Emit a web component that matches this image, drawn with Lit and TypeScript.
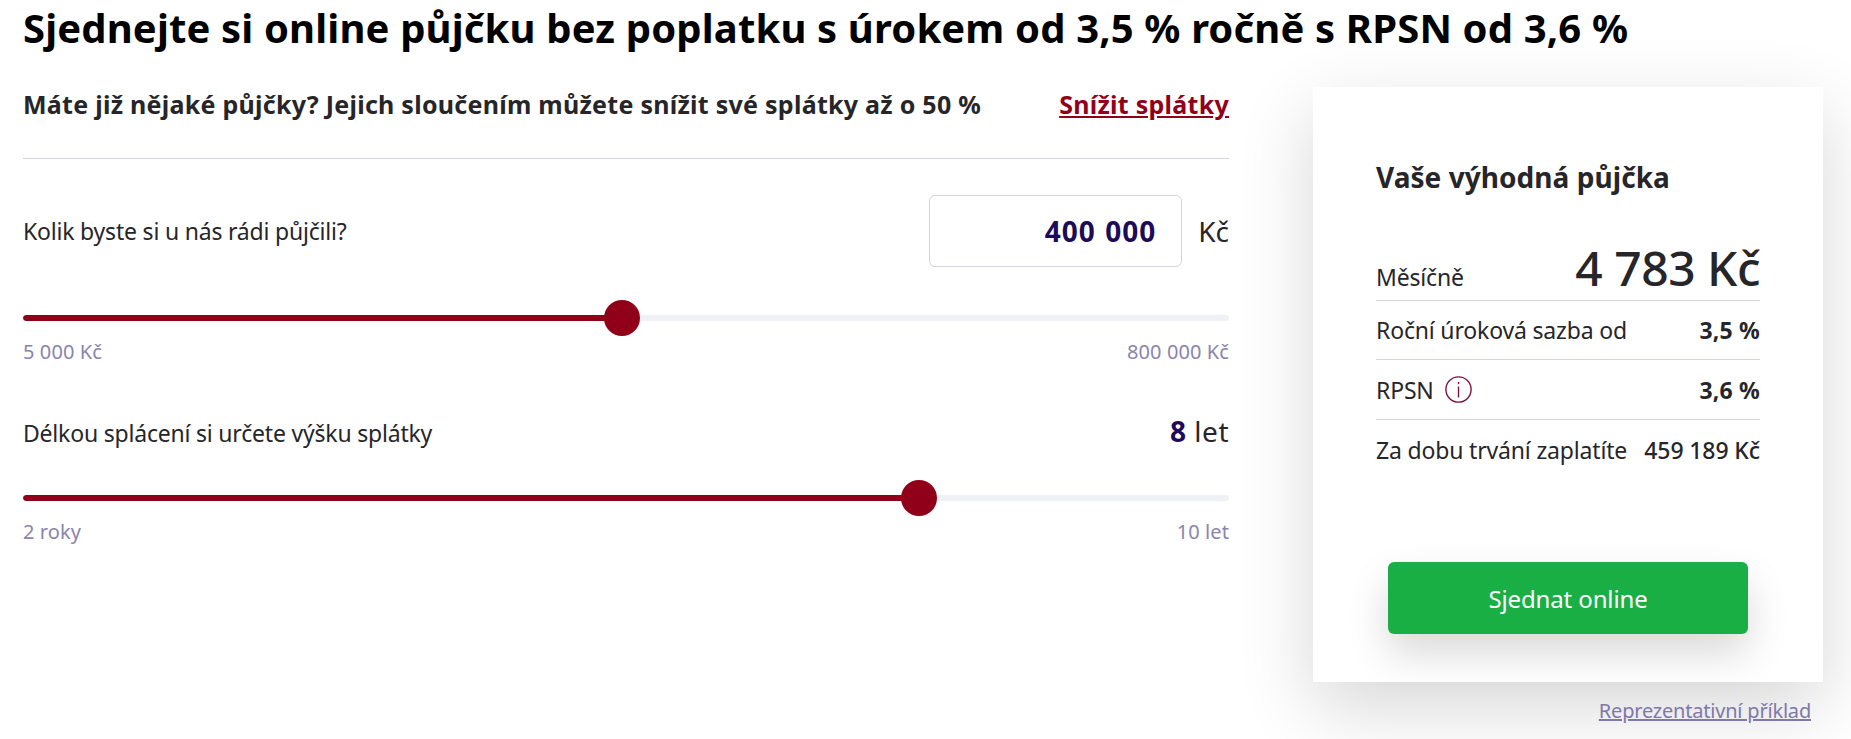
import { LitElement, html, css } from "lit";
import { customElement } from "lit/decorators.js";

@customElement("range-slider")
class RangeSlider extends LitElement {
  static properties = { pct: { type: Number }, min: {}, max: {} };
  declare pct: number;
  declare min: string;
  declare max: string;
  static styles = css`
    :host { display: block; }
    .rail { position: relative; height: 36px; display: flex; align-items: center; }
    .track { width: 100%; height: 6px; border-radius: 3px; background: #eef1f5; overflow: hidden; }
    .fill { height: 100%; background: #910019; border-radius: 3px; }
    .thumb { position: absolute; top: 0; width: 36px; height: 36px; border-radius: 50%; background: #910019; }
    .ends { display: flex; justify-content: space-between; margin-top: 4px; font-size: 20px; line-height: 24px; color: #8b84ad; letter-spacing: 0.1px; }
  `;
  render() {
    const p = this.pct;
    return html`
      <div class="rail">
        <div class="track"><div class="fill" style="width:${p * 100}%"></div></div>
        <div class="thumb" style="left:${p * 1170}px"></div>
      </div>
      <div class="ends"><span>${this.min}</span><span>${this.max}</span></div>
    `;
  }
}

@customElement("app-root")
class AppRoot extends LitElement {
  static styles = css`
    :host { display: block; height: 739px; overflow: hidden; background: #fff; font-family: "Noto Sans", "Open Sans", sans-serif; color: #26262a; }
    h1 { margin: 0 28px 31px 23px; font-size: 40px; line-height: 56px; font-weight: 700; color: #000; white-space: nowrap; letter-spacing: 0.15px; }
    .main { display: flex; align-items: flex-start; padding-left: 23px; }
    .left { width: 1206px; flex: none; }
    .right { width: 510px; flex: none; margin-left: 84px; display: flex; flex-direction: column; }
    .promo { display: flex; justify-content: space-between; height: 71px; border-bottom: 1px solid #d4d1e3; font-size: 25px; line-height: 35px; font-weight: 700; letter-spacing: 0.27px; }
    .promo a { color: #910019; text-decoration: underline; }
    .row { display: flex; justify-content: space-between; align-items: center; font-size: 23px; letter-spacing: -0.2px; }
    .amount { margin-top: 36px; }
    .field { display: flex; align-items: center; gap: 16px; font-size: 28px; letter-spacing: 0; }
    .box { width: 253px; height: 72px; box-sizing: border-box; border: 1px solid #d4d1e3; border-radius: 6px; padding-right: 25px; display: flex; align-items: center; justify-content: flex-end; font-weight: 700; color: #1e0a5a; letter-spacing: 1px; word-spacing: 1px; }
    .first { margin-top: 33px; }
    .term { margin-top: 48px; height: 40px; align-items: baseline; }
    .term-val { font-size: 28px; letter-spacing: 0.5px; }
    .term-val b { color: #1e0a5a; }
    .second { margin-top: 28px; }
    .card { height: 595px; box-sizing: border-box; padding: 70px 63px 48px; background: #fff; box-shadow: 0 25px 70px rgba(0, 0, 0, 0.16); display: flex; flex-direction: column; }
    h2 { margin: 0; font-size: 28px; line-height: 40px; font-weight: 700; letter-spacing: 0.05px; }
    .line { display: flex; justify-content: space-between; align-items: center; height: 59px; border-bottom: 1px solid #d4d1e3; font-size: 23px; letter-spacing: -0.17px; }
    .line.rate { height: 58px; }
    .line.last { border-bottom: none; }
    .line b { font-weight: 700; letter-spacing: 0.2px; }
    .line .sum { font-weight: 500; letter-spacing: -0.1px; }
    .month { align-items: baseline; height: 62px; margin-top: 41px; }
    .month strong { font-size: 48px; line-height: 60px; font-weight: 500; letter-spacing: -0.5px; }
    .name { display: flex; align-items: center; gap: 11px; }
    .info { width: 27px; height: 27px; display: block; }
    .cta { margin: auto 12px 0; height: 72px; border-radius: 6px; background: #1aaf44; color: #fff; font-size: 24px; display: flex; align-items: center; justify-content: center; box-shadow: 0 20px 40px rgba(0, 0, 0, 0.15); letter-spacing: -0.13px; }
    .example { align-self: flex-end; margin: 16px 12px 0 0; font-size: 20px; line-height: 26px; color: #8078a8; text-decoration: underline; letter-spacing: -0.2px; }
  `;
  render() {
    return html`
      <h1>Sjednejte si online půjčku bez poplatku s úrokem od 3,5 % ročně s RPSN od 3,6 %</h1>
      <div class="main">
        <div class="left">
          <div class="promo">
            <span>Máte již nějaké půjčky? Jejich sloučením můžete snížit své splátky až o 50 %</span>
            <a>Snížit splátky</a>
          </div>
          <div class="row amount">
            <span>Kolik byste si u nás rádi půjčili?</span>
            <div class="field"><div class="box">400 000</div><span>Kč</span></div>
          </div>
          <range-slider class="first" .pct=${395000 / 795000} min="5 000 Kč" max="800 000 Kč"></range-slider>
          <div class="row term">
            <span>Délkou splácení si určete výšku splátky</span>
            <span class="term-val"><b>8</b> let</span>
          </div>
          <range-slider class="second" .pct=${0.75} min="2 roky" max="10 let"></range-slider>
        </div>
        <div class="right">
          <div class="card">
            <h2>Vaše výhodná půjčka</h2>
            <div class="line month"><span>Měsíčně</span><strong>4 783 Kč</strong></div>
            <div class="line rate"><span>Roční úroková sazba od</span><b>3,5 %</b></div>
            <div class="line">
              <span class="name">RPSN
                <svg class="info" viewBox="0 0 27 27" fill="none" stroke="#7d1248" stroke-width="1.4">
                  <circle cx="13.5" cy="13.5" r="12.6"></circle>
                  <path d="M13.5 10.5v11"></path>
                  <path d="M13.5 6v2.2"></path>
                </svg>
              </span>
              <b>3,6 %</b>
            </div>
            <div class="line last"><span>Za dobu trvání zaplatíte</span><span class="sum">459 189 Kč</span></div>
            <div class="cta">Sjednat online</div>
          </div>
          <a class="example">Reprezentativní příklad</a>
        </div>
      </div>
    `;
  }
}
